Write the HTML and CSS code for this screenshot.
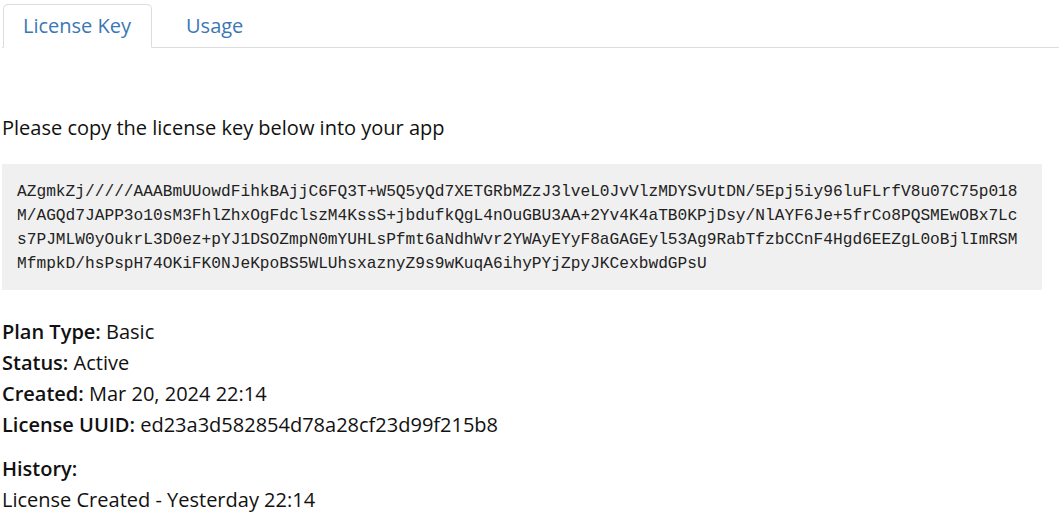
FILE: index.html
```html
<!DOCTYPE html>
<html lang="en">
<head>
<meta charset="utf-8">
<title>License Key</title>
<link rel="stylesheet" href="styles.css">
</head>
<body>
<div class="page">
  <ul class="tabs">
    <li class="tab active"><a href="#">License Key</a></li>
    <li class="tab"><a href="#">Usage</a></li>
  </ul>
  <div class="panel">
    <p class="intro">Please copy the license key below into your app</p>
    <pre class="key">AZgmkZj/////AAABmUUowdFihkBAjjC6FQ3T+W5Q5yQd7XETGRbMZzJ3lveL0JvVlzMDYSvUtDN/5Epj5iy96luFLrfV8u07C75p018M/AGQd7JAPP3o10sM3FhlZhxOgFdclszM4KssS+jbdufkQgL4nOuGBU3AA+2Yv4K4aTB0KPjDsy/NlAYF6Je+5frCo8PQSMEwOBx7Lcs7PJMLW0yOukrL3D0ez+pYJ1DSOZmpN0mYUHLsPfmt6aNdhWvr2YWAyEYyF8aGAGEyl53Ag9RabTfzbCCnF4Hgd6EEZgL0oBjlImRSMMfmpkD/hsPspH74OKiFK0NJeKpoBS5WLUhsxaznyZ9s9wKuqA6ihyPYjZpyJKCexbwdGPsU</pre>
    <div class="details">
      <div class="row"><span class="label">Plan Type:</span> Basic</div>
      <div class="row"><span class="label">Status:</span> Active</div>
      <div class="row"><span class="label">Created:</span> Mar 20, 2024 22:14</div>
      <div class="row"><span class="label">License UUID:</span> ed23a3d582854d78a28cf23d99f215b8</div>
    </div>
    <div class="history">
      <div class="row"><span class="label">History:</span></div>
      <div class="row">License Created - Yesterday 22:14</div>
    </div>
  </div>
</div>
</body>
</html>
```
FILE: styles.css
```css
html, body {
  margin: 0;
  padding: 0;
  background: #ffffff;
}
body {
  font-family: "Open Sans", "Noto Sans", sans-serif;
  font-size: 20px;
  color: #111111;
}
.page {
  padding: 4px 0 0 2px;
}
.tabs {
  list-style: none;
  margin: 0;
  padding: 0 0 0 1px;
  display: flex;
  border-bottom: 1px solid #dddddd;
}
.tab {
  margin-bottom: -1px;
  margin-right: 14px;
}
.tab a {
  display: block;
  padding: 0 20px 0 19px;
  height: 42px;
  line-height: 42px;
  font-size: 20px;
  color: #3a77b5;
  text-decoration: none;
  border: 1px solid transparent;
  border-radius: 5px 5px 0 0;
}
.tab.active a {
  background: #ffffff;
  border-color: #dddddd #dddddd transparent;
}
.panel {
  padding-top: 64px;
}
.intro {
  margin: 0 0 21px 0;
  line-height: 31px;
}
.key {
  margin: 0 17px 26px 0;
  padding: 16px 15px 14px 15px;
  background: #f0f0f0;
  font-family: "Liberation Mono", "Courier New", monospace;
  font-size: 16.2px;
  line-height: 24px;
  color: #222222;
  white-space: pre-wrap;
  word-break: break-all;
}
.details, .history {
  line-height: 31px;
}
.history {
  margin-top: 13px;
}
.label {
  font-weight: 600;
}
```
